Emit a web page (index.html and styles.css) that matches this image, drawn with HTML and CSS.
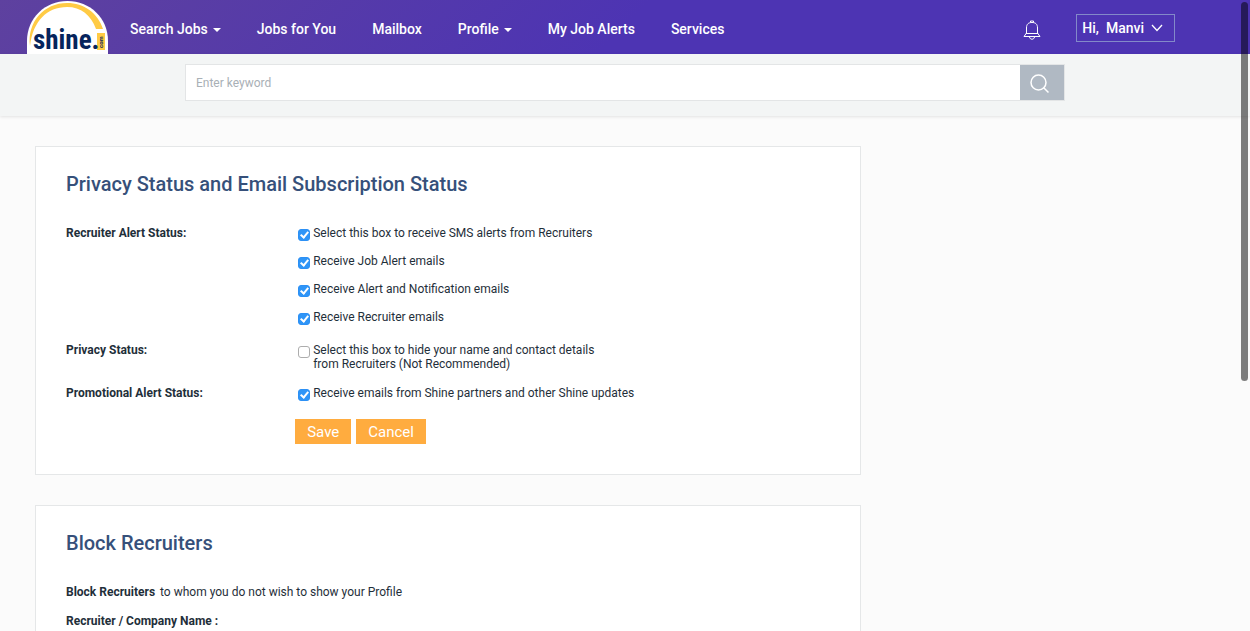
FILE: index.html
```html
<!DOCTYPE html>
<html lang="en">
<head>
<meta charset="utf-8">
<title>Privacy Settings - Shine.com</title>
<link rel="stylesheet" href="styles.css">
</head>
<body>
<header class="header">
  <a class="logo" href="#" aria-label="shine.com home">
    <svg width="81" height="54" viewBox="0 0 81 54">
      <path d="M0 54V41C0 18 18 1 40.500 1S81 18 81 41v13z" fill="#fff"/>
      <path d="M3 46C0 22 17 3 40 3c17 0 31 10 36 26h-7C64 15 54 7 40 7 20 7 6 21 3 46z" fill="#ffcb45"/>
      <path d="M70 33h8v17h-8z" fill="#ffcb45"/>
      <text class="logo-name" x="6" y="49">shine.</text>
      <text class="logo-com" transform="translate(76 48) rotate(-90)">com</text>
    </svg>
  </a>
  <nav class="nav">
    <a class="nav-link" href="#">Search Jobs <span class="caret"></span></a>
    <a class="nav-link" href="#">Jobs for You</a>
    <a class="nav-link" href="#">Mailbox</a>
    <a class="nav-link" href="#">Profile <span class="caret"></span></a>
    <a class="nav-link" href="#">My Job Alerts</a>
    <a class="nav-link" href="#">Services</a>
  </nav>
  <div class="account">
    <button class="bell" type="button" aria-label="Notifications">
      <svg width="18" height="20" viewBox="0 0 18 20" fill="none" stroke="#fff">
        <path d="M7.500 2.500V1h3v1.500M3.500 13V8C3.500 4 5.500 2.500 9 2.500S14.500 4 14.500 8v5M3.500 13 1 16.500h16L14.500 13M3 13.500h12M6.500 17c.3 1.500 1.200 2.200 2.500 2.200s2.200-.7 2.500-2.200"/>
      </svg>
    </button>
    <button class="user" type="button"><span>Hi,</span><span>Manvi</span>
      <svg width="12" height="8" viewBox="0 0 12 8" fill="none" stroke="#fff" stroke-width="1.300"><path d="M1 1l5 5.500L11 1"/></svg>
    </button>
  </div>
</header>
<form class="search-bar">
  <div class="search">
    <input class="search-input" type="text" placeholder="Enter keyword" aria-label="Enter keyword">
    <button class="search-button" type="button" aria-label="Search">
      <svg width="20" height="20" viewBox="0 0 20 20" fill="none" stroke="#fff" stroke-width="1.500"><circle cx="8.500" cy="8.500" r="7.500"/><path d="M13.500 13.500l5 5"/></svg>
    </button>
  </div>
</form>
<main class="content">
  <section class="card">
    <h1 class="card-title">Privacy Status and Email Subscription Status</h1>
    <form>
      <div class="row">
        <div class="row-label">Recruiter Alert Status:</div>
        <div class="options options-list">
          <label class="option"><input class="check" type="checkbox" checked><span>Select this box to receive SMS alerts from Recruiters</span></label>
          <label class="option"><input class="check" type="checkbox" checked><span>Receive Job Alert emails</span></label>
          <label class="option"><input class="check" type="checkbox" checked><span>Receive Alert and Notification emails</span></label>
          <label class="option"><input class="check" type="checkbox" checked><span>Receive Recruiter emails</span></label>
        </div>
      </div>
      <div class="row">
        <div class="row-label">Privacy Status:</div>
        <div class="options">
          <label class="option"><input class="check" type="checkbox"><span>Select this box to hide your name and contact details<br>from Recruiters (Not Recommended)</span></label>
        </div>
      </div>
      <div class="row">
        <div class="row-label">Promotional Alert Status:</div>
        <div class="options">
          <label class="option"><input class="check" type="checkbox" checked><span>Receive emails from Shine partners and other Shine updates</span></label>
        </div>
      </div>
      <div class="actions">
        <button class="button" type="button">Save</button>
        <button class="button" type="button">Cancel</button>
      </div>
    </form>
  </section>
  <section class="card">
    <h2 class="card-title">Block Recruiters</h2>
    <p class="note"><strong>Block Recruiters</strong> to whom you do not wish to show your Profile</p>
    <p class="note"><strong>Recruiter / Company Name :</strong></p>
  </section>
</main>
<div class="scroll-thumb"></div>
</body>
</html>
```
FILE: styles.css
```css
*,
*::after {
  box-sizing: border-box;
}

body {
  margin: 0;
  height: 100vh;
  overflow: hidden;
  background: #fbfbfb;
  color: #1f2f3a;
  font-family: Roboto, "Liberation Sans", sans-serif;
  font-size: 12px;
  line-height: 14px;
}

button,
input {
  font-family: inherit;
}

.header {
  display: flex;
  align-items: center;
  height: 54px;
  padding: 0 75px 0 27px;
  background: linear-gradient(135deg, #5e419f 0%, #4d34b3 50%, #4d34b3 100%);
}

.logo {
  height: 54px;
}

.logo svg {
  display: block;
}

.logo-name {
  font: bold 27px "Liberation Sans Narrow", "Roboto Condensed", Roboto, sans-serif;
  fill: #06245c;
}

.logo-com {
  font: bold 6px Roboto, sans-serif;
  fill: #06245c;
}

.nav {
  display: flex;
  gap: 36px;
  margin-left: 22px;
  padding-top: 4px;
}

.nav-link {
  display: flex;
  align-items: center;
  gap: 5px;
  color: #fff;
  font-size: 14px;
  font-weight: 500;
  line-height: 20px;
  text-decoration: none;
  white-space: nowrap;
}

.caret {
  border: 4px solid transparent;
  border-top-color: #fff;
  border-bottom: 0;
  margin-top: 2px;
}

.account {
  display: flex;
  align-items: center;
  gap: 35px;
  margin-left: auto;
  padding-top: 2px;
}

.bell {
  padding: 0;
  border: 0;
  background: none;
}

.bell svg {
  display: block;
  margin-top: 4px;
}

.user {
  display: flex;
  align-items: center;
  gap: 7px;
  height: 28px;
  padding: 0 11px 0 5px;
  border: 1px solid #8389c9;
  background: none;
  color: #fff;
  font-size: 14px;
  font-weight: 500;
}

.search-bar {
  height: 62px;
  padding: 10px 185px;
  background: #f3f5f5;
  box-shadow: 0 1px 3px rgba(0, 0, 0, 0.1);
}

.search {
  display: flex;
  height: 37px;
  border: 1px solid #e3e5e6;
  background: #fff;
}

.search-input {
  flex: 1;
  min-width: 0;
  padding: 0 10px;
  border: 0;
  background: none;
  font-size: 12px;
}

.search-input::placeholder {
  color: #a9b0b6;
}

.search-button {
  width: 44px;
  padding: 2px 0 0 10px;
  border: 0;
  background: #b0b9c3;
}

.search-button svg {
  display: block;
}

.content {
  display: flex;
  flex-direction: column;
  gap: 30px;
  padding: 30px 35px;
}

.card {
  width: 70%;
  padding: 24px 30px 30px;
  border: 1px solid #e5e7e8;
  background: #fff;
}

.card-title {
  margin: 0 0 28px;
  color: #36507a;
  font-size: 20px;
  font-weight: 500;
  line-height: 27px;
}

.row {
  display: grid;
  grid-template-columns: 30% 1fr;
  margin-bottom: 15px;
}

.row-label,
.note strong {
  font-weight: 700;
}

.options {
  display: flex;
  flex-direction: column;
  gap: 14px;
  padding-left: 3px;
}

.options-list {
  padding-bottom: 4px;
}

.option {
  display: flex;
  align-items: flex-start;
  gap: 3px;
}

.check {
  appearance: none;
  display: grid;
  place-items: center;
  flex: none;
  width: 12px;
  height: 12px;
  margin: 3px 0 -1px;
  border: 1px solid #adadad;
  border-radius: 3px;
  background: #fff;
}

.check:checked {
  border-color: #2c90f5;
  background: #2f95f7;
}

.check:checked::after {
  content: "";
  width: 5px;
  height: 8px;
  margin-bottom: 2px;
  border: solid #fff;
  border-width: 0 2px 2px 0;
  transform: rotate(40deg);
}

.actions {
  display: flex;
  gap: 5px;
  margin: 19px 0 0 30%;
}

.button {
  height: 25px;
  padding: 0 12px;
  border: 0;
  background: #ffac3f;
  color: #fff;
  font-size: 15px;
}

.note {
  margin: 0 0 15px;
}

.note strong {
  margin-right: 2px;
}

.scroll-thumb {
  position: fixed;
  top: 2px;
  right: 2px;
  width: 7px;
  height: 60%;
  border-radius: 4px;
  background: rgba(0, 0, 0, 0.5);
}
```
